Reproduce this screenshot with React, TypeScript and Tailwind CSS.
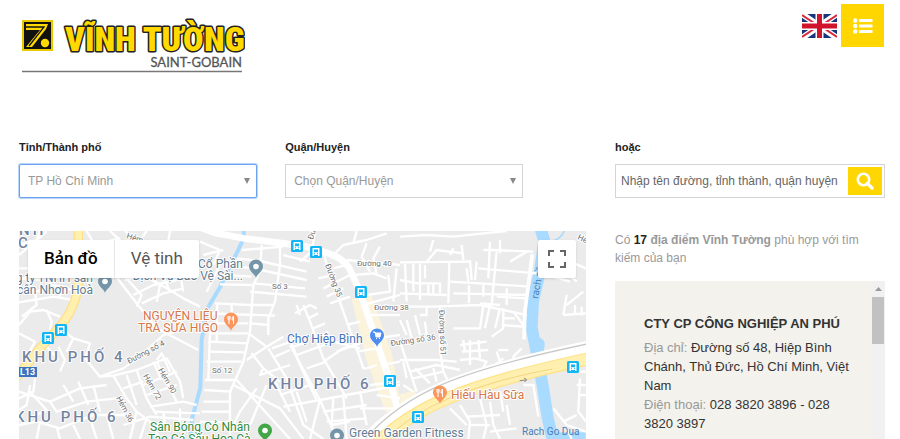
import { useState } from "react";

const streets = {
    west: [
        "M27 130 L70 130 L130 70 L205 60", "M27 90 L110 20", "M27 190 L80 200 L130 180 L190 195", "M27 300 L60 260 L100 255 L150 275", "M110 255 L125 290 L120 315",
        "M27 232 L70 225 L130 215 L190 225", "M75 200 L80 240 L35 275", "M150 180 L150 220", "M27 325 L75 350 L50 395", "M230 18 L260 70 L330 170 L400 260 L440 310 L565 375",
        "M300 18 L345 60 L420 160 L520 220 L570 245", "M345 18 L400 60 L480 90 L570 130", "M345 165 L400 150 L450 180 L440 230", "M370 210 L430 180 L500 165", "M395 235 L460 205 L520 190",
        "M410 18 L380 60 L330 90", "M480 18 L470 80", "M240 60 L330 40", "M345 155 L395 210 L380 245", "M450 130 L480 200", "M500 90 L520 200", "M27 520 L70 500 L75 460",
        "M150 310 L190 340 L240 355 L225 400 L270 455 L340 430 L400 385 L460 330 L500 320", "M145 365 L165 405 L150 440", "M110 365 L145 405", "M190 340 L170 380", "M270 455 L310 452 L350 520 L380 560 L420 590 L450 642",
        "M310 452 L380 435 L470 400 L510 470 L520 520", "M380 435 L410 520 L440 570", "M440 410 L500 530", "M350 450 L380 540", "M400 480 L500 440", "M410 510 L500 480", "M340 490 L400 470",
        "M430 560 L570 565", "M340 600 L420 575 L550 585", "M420 545 L520 530 L560 540", "M460 560 L465 600", "M510 550 L510 600", "M380 560 L360 642", "M410 580 L390 642", "M27 500 L120 530 L210 490 L290 480",
        "M120 530 L140 560 L230 530 L320 520", "M160 480 L190 530", "M205 470 L235 540", "M250 480 L270 560", "M60 480 L50 540 L27 555", "M27 600 L80 590 L150 610 L250 570 L350 570", "M90 590 L80 642", "M140 605 L150 642",
        "M190 600 L210 642", "M240 580 L260 642", "M290 570 L310 642", "M60 500 L110 555 L60 580", "M440 405 L455 385 L480 440", "M430 410 L455 465", "M27 60 L80 45 L90 18", "M110 100 L130 150", "M30 160 L100 165",
    ],
    middle: [
        "M185 60 L180 140 L160 180 L150 320 L130 410 L90 500 L90 642", "M240 60 L240 120 L225 230 L205 280 L205 330", "M125 75 L250 65", "M110 100 L180 108 L320 140", "M75 120 L160 130 L320 165", "M250 90 L330 110",
        "M70 150 L155 155", "M60 178 L155 180", "M160 175 L315 190", "M150 200 L320 215", "M45 235 L150 240 L220 240", "M35 265 L225 272", "M150 295 L205 300", "M30 295 L145 295", "M30 325 L145 325", "M25 350 L145 355", "M25 380 L135 382",
        "M20 410 L125 410", "M15 465 L110 465", "M12 495 L95 500", "M10 530 L90 530", "M5 560 L90 560", "M0 590 L90 592", "M52 235 L50 350", "M95 235 L95 270", "M30 320 L25 465", "M145 325 L200 365 L250 335", "M200 365 L140 405", "M205 370 L260 460 L310 600 L370 642",
        "M215 370 L275 350", "M225 395 L270 375", "M265 330 L300 420 L350 525", "M310 240 L330 290 L370 400 L440 520", "M285 265 L330 240 L350 250", "M290 240 L300 270", "M325 280 L355 265", "M340 310 L375 295", "M350 340 L385 320",
        "M280 365 L325 350", "M290 390 L400 350 L480 370", "M370 410 L430 370 L480 355", "M320 430 L380 410", "M270 360 L360 525 L600 480", "M155 385 L190 430 L180 450 L270 420", "M190 430 L240 470", "M110 465 L250 620 L270 642", "M100 480 L180 520 L240 550 L310 642",
        "M170 490 L120 560 L90 620", "M200 480 L150 600", "M225 470 L270 560", "M240 510 L330 480", "M250 545 L360 525 L330 642", "M290 500 L320 590", "M360 525 L410 640", "M400 520 L395 600 L450 590", "M430 515 L440 642", "M480 500 L500 600", "M370 560 L500 540", "M380 590 L500 580",
        "M345 18 L335 80 L300 110", "M370 75 L380 120 L430 260 L480 400", "M370 190 L450 150", "M380 215 L430 190", "M390 235 L450 215", "M355 160 L400 150", "M400 130 L440 120", "M480 400 L490 430 L500 430", "M410 380 L480 355",
        "M400 90 L430 60 L500 45 L560 25", "M440 105 L600 120", "M470 18 L460 55", "M500 55 L485 95 L510 140", "M540 65 L520 100 L530 150", "M460 150 L520 145 L560 160", "M490 240 L600 210", "M500 210 L570 200 L565 150", "M510 270 L600 270", "M530 340 L600 330", "M470 380 L530 370",
        "M440 300 L480 290", "M500 430 L530 420", "M545 420 L600 410", "M510 480 L600 470", "M530 510 L600 520", "M480 550 L600 550", "M590 130 L580 230",
        "M0 50 L60 75 L40 120", "M10 90 L70 75", "M20 200 L60 120",
    ],
    east: [
        "M0 35 L80 30 L160 35 L250 25 L320 18", "M90 80 L100 45", "M80 110 L110 75 L190 85", "M150 90 L160 70", "M185 60 L190 105", "M0 112 L210 110", "M15 115 L20 230", "M40 115 L40 200", "M75 120 L75 160", "M60 115 L60 225", "M148 112 L145 235", "M0 205 L140 210",
        "M0 165 L55 175 L120 175 L120 205", "M85 180 L85 210", "M100 175 L100 205", "M0 245 L100 245 L240 240 L380 270", "M150 170 L240 175 L390 185", "M200 130 L205 170", "M210 105 L215 165", "M230 110 L225 165", "M250 75 L275 75 L400 80", "M270 50 L265 160", "M235 130 L410 145",
        "M300 45 L300 85", "M290 80 L275 240", "M330 110 L380 80", "M160 205 L380 210", "M207 180 L207 235", "M250 180 L250 215", "M320 190 L320 240", "M290 215 L380 220", "M250 240 L240 310 L160 310", "M270 240 L255 310", "M300 250 L285 310", "M310 250 L310 310 L275 335", "M305 300 L370 305",
        "M310 280 L345 280", "M340 260 L370 300", "M240 235 L300 240", "M0 285 L20 330", "M20 285 L35 340", "M45 270 L60 330", "M75 290 L80 330", "M120 245 L120 375 L130 440 L150 480", "M60 270 L80 270 L80 245", "M0 350 L30 440 L50 500", "M180 360 L260 350", "M185 380 L265 375", "M210 345 L210 420",
        "M235 345 L240 400", "M190 345 L195 380", "M225 400 L260 410 L220 480", "M180 405 L225 400", "M290 380 L300 410 L340 430", "M295 375 L325 375", "M365 370 L340 395 L345 430", "M260 440 L310 400", "M0 405 L110 405 L170 410", "M30 440 L110 420 L180 435", "M40 460 L130 440", "M45 430 L90 475", "M100 430 L110 470", "M10 410 L20 460",
        "M455 100 L530 170", "M480 50 L510 110 L558 130", "M460 155 L510 170", "M490 270 L558 265", "M500 210 L490 270", "M550 200 L500 240", "M525 240 L525 270", "M545 245 L545 272", "M480 410 L520 370 L558 375", "M500 390 L525 385", "M530 440 L558 440", "M540 460 L535 560 L558 590",
        "M530 480 L558 480", "M535 510 L558 510", "M180 540 L210 590 L205 642", "M150 550 L200 600", "M200 575 L300 570", "M240 520 L260 600 L250 642", "M270 530 L280 600 L300 642", "M300 500 L310 560", "M370 480 L400 480 L415 575", "M210 600 L270 600", "M270 620 L350 610", "M460 550 L500 600 L558 620",
        "M490 590 L530 570", "M500 610 L515 642", "M320 540 L330 600", "M10 480 L40 500",
    ],
};

const stops = [[42, 99], [29, 107], [278, 15], [297, 21], [342, 61], [371, 150], [399, 186], [554, 136]];

const Street = ({ lines }: { lines: string[] }) => (
    <g fill="none" stroke="#fff" strokeWidth="7" strokeLinejoin="round">
        {lines.map((d) => <path key={d} d={d} />)}
    </g>
);

const BusStop = ({ x, y }: { x: number; y: number }) => (
    <g transform={`translate(${x - 6} ${y - 6})`}>
        <rect width="12" height="12" rx="1.5" fill="#12b5f5" />
        <path d="M2.500 2h7v8H8V9H4v1H2.500z" fill="#fff" />
        <path d="M4 3.500h4v2.700H4zM4 7.300h1v1H4zM7 7.300h1v1H7z" fill="#12b5f5" />
    </g>
);

const Pin = ({ x, y, color, kind = "dot" }: { x: number; y: number; color: string; kind?: string }) => (
    <g transform={`translate(${x} ${y})`}>
        <path d="M0 0C-.8-4-7-6.500-7-11.500a7 7 0 0 1 14 0C7-6.500.8-4 0 0z" fill={color} />
        {kind === "dot" && <circle cy="-11.500" r="2.800" fill="#fff" />}
        {kind === "food" && <path d="M-3-15v3q0 1 1 1v4M-1-15v3q0 1-1 1M-2-15v3M2.500-7v-8q-1.500 1-1.500 4h1.500" fill="none" stroke="#fff" />}
        {kind === "cart" && <path d="M-4-15h2l1 5h4l1-4h-6M-1-8.500h1M2-8.500h1" fill="#fff" stroke="#fff" />}
    </g>
);

const MapCanvas = () => (
    <svg className="block h-full w-full bg-[#ebebeb] font-['Roboto',sans-serif]" role="img" aria-label="Bản đồ">
        <g transform="scale(.33333)">
            <g fill="#fbf3dc">
                <path d="M998 205l60-10 60 170 35 190-55-15-55-150z" />
                <path d="M1143 490l45-12 10 50-50 22z" />
            </g>
            <g fill="none" stroke="#a9daff">
                <path strokeWidth="12" d="M674 0L675 20L662 48L605 165L564 235L548 325L544 470L520 560L512 642" />
                <path strokeWidth="36" d="M1564 -10L1576 30L1563 120L1542 210L1538 290L1556 380L1572 470L1586 560L1605 642" />
                <path strokeWidth="5" d="M1600 30Q1625 25 1636 0" />
                <path fill="#a9daff" stroke="none" d="M1545 318q30 2 32 18t-12 46zM1590 604h110v40h-105z" />
            </g>
            <g transform="translate(-27 -18)"><Street lines={streets.west} /></g>
            <g transform="translate(543 -18)"><Street lines={streets.middle} /></g>
            <g transform="translate(1143 -18)"><Street lines={streets.east} /></g>
            <g fill="none" strokeLinejoin="round">
                <path stroke="#fff" strokeWidth="20" d="M550 -8L593 7L673 22L793 37L860 46L913 62Q965 75 990 110L1023 182L1073 332L1113 452L1143 560" />
                <path stroke="#fff" strokeWidth="11" d="M1540 70L1518 240L1515 325" />
                <path stroke="#fff" strokeWidth="66" d="M1040 650Q1135 545 1275 485T1710 362" />
                <path stroke="#c9c9c9" strokeWidth="4" d="M1040 622Q1130 520 1270 460T1710 338" />
                <path stroke="#ffe287" strokeWidth="39" d="M1050 662Q1145 560 1285 502T1710 383" />
                <path stroke="#fff0b0" strokeWidth="32" d="M1050 662Q1145 560 1285 502T1710 383" />
                <path stroke="#efc66b" strokeWidth="2" d="M1080 646Q1160 554 1300 498T1600 414" />
                <path stroke="#ffdf83" strokeWidth="28" d="M178 -10L178 135Q180 215 128 280L60 355L-20 455" />
                <path stroke="#fff0b0" strokeWidth="21" d="M178 -10L178 135Q180 215 128 280L60 355L-20 455" />
                <path stroke="#8b8b8b" strokeWidth="3" d="M1502 449l20-2m-7-6l8 5-6 7" />
            </g>
        </g>
        {stops.map(([x, y]) => <BusStop key={`${x}-${y}`} x={x} y={y} />)}
        <rect x="-8" y="136" width="26" height="10" fill="#3c75bd" />
        <text x="1" y="144" fontSize="9" fontWeight="700" fill="#fff">L13</text>
        <g stroke="#fff" strokeWidth="2" strokeLinejoin="round" paintOrder="stroke">
            <g fontSize="8" fill="#6f6f6f">
                <text x="253" y="58">Số 3</text>
                <text x="193" y="142">Số 12</text>
                <text x="338" y="35">Đường 40</text>
                <text x="355" y="79">Đường 38</text>
                <text transform="translate(372 115) rotate(-8)">Đường số 36</text>
                <text transform="translate(306 34) rotate(69)">Đường 35</text>
                <text transform="translate(420 79) rotate(88)">Đường số 51</text>
                <text transform="translate(110 133) rotate(-28)">Đường số 4</text>
                <text transform="translate(139 139) rotate(60)">Hẻm 90</text>
                <text transform="translate(124 145) rotate(60)">Hẻm 72</text>
                <text transform="translate(97 167) rotate(62)">Hẻm 36</text>
                <text transform="translate(107 7) rotate(18)">Hẻm</text>
                <text transform="translate(558 8) rotate(25)">Hẻm</text>
                <text transform="translate(294 9) rotate(-75)">Đường</text>
            </g>
            <g fontSize="15" fontWeight="500" fill="#73839f" className="tracking-[3px]">
                <text x="3" y="131">KHU PHỐ 4</text>
                <text x="-4" y="191">KHU PHỐ 6</text>
                <text x="249" y="158">KHU PHỐ 6</text>
                <text x="0" y="4">NH</text>
                <text x="-1" y="17">C</text>
            </g>
            <g fontSize="12" fill="#637c91">
                <text x="74" y="51" textAnchor="end">Công ty TNHH sản</text>
                <text x="-2" y="63">cân Nhơn Hoà</text>
                <text x="224" y="37" textAnchor="end">Công Ty Cổ Phần</text>
                <text x="224" y="49" textAnchor="end">Dịch Vụ Bảo Vệ Sài...</text>
                <text x="330" y="206">Green Garden Fitness</text>
            </g>
            <g fontSize="12" fill="#d4764b">
                <text x="124" y="89">NGUYÊN LIỆU</text>
                <text x="119" y="101">TRÀ SỮA HIGO</text>
                <text x="432" y="168">Hiếu Hàu Sữa</text>
            </g>
            <g fontSize="12" fill="#2e8b3d">
                <text x="131" y="200">Sân Bóng Cỏ Nhân</text>
                <text x="129" y="212">Tạo Cá Sấu Hoa Cà</text>
            </g>
            <text x="268" y="112" fontSize="12" fill="#4272b8">Chợ Hiệp Bình</text>
        </g>
        <g fontSize="10" fill="#4a80b8">
            <text x="503" y="204">Rach Go Dua</text>
            <text transform="translate(519 68) rotate(-80)">rach cầu</text>
        </g>
        <Pin x={86} y={62} color="#7595a8" />
        <Pin x={237} y={47} color="#7595a8" />
        <Pin x={318} y={216} color="#7595a8" />
        <Pin x={246} y={211} color="#43a747" />
        <Pin x={212} y={100} color="#fb965f" kind="food" />
        <Pin x={421} y={173} color="#fb965f" kind="food" />
        <Pin x={358} y={116} color="#4d8df0" kind="cart" />
    </svg>
);

const Logo = () => (
    <svg width="224" height="64" viewBox="0 0 224 64" role="img" aria-label="Vĩnh Tường Saint-Gobain">
        <path d="M1 8h31v31H1z" fill="#e8c800" />
        <path d="M3 10h27v27H3z" fill="#111" />
        <path d="M5 12h22l-2 5-14 18H5l14-17H5z" fill="#ffd900" />
        <path d="M5 15h18L8 34" fill="none" stroke="#111" strokeWidth="1.300" />
        <circle cx="24" cy="31" r="4.200" fill="#ffd900" />
        <text x="44" y="39" fontSize="34" fontWeight="900" fill="#ffd900" stroke="#222" strokeWidth="3" strokeLinejoin="round" paintOrder="stroke" className="font-['Roboto_Condensed','Liberation_Sans_Narrow',sans-serif]">VĨNH TƯỜNG</text>
        <text x="221" y="55" textAnchor="end" fontSize="13" fill="#555" stroke="#555" strokeWidth=".3" className="font-['Lato',sans-serif]">SAINT-GOBAIN</text>
        <path d="M1 59.500h220" stroke="#777" strokeWidth="1.500" />
    </svg>
);

const Flag = () => (
    <svg width="35" height="24" viewBox="0 0 35 24" aria-hidden="true">
        <path d="M0 0h35v24H0z" fill="#16357d" />
        <path d="M0 0l35 24M35 0L0 24" stroke="#fff" strokeWidth="6" />
        <path d="M0 1l15 10M35 1L20 11M0 23l15-10M35 23L20 13" stroke="#d6293b" strokeWidth="2" />
        <path d="M17.500 0v24M0 12h35" stroke="#fff" strokeWidth="8" />
        <path d="M17.500 0v24M0 12h35" stroke="#d0142c" strokeWidth="5" />
    </svg>
);

const SelectField = ({ id, label, value, active }: { id: string; label: string; value: string; active?: boolean }) => (
    <div className="w-[42%]">
        <label htmlFor={id} className="block text-[11px] font-bold leading-4 text-[#222]">{label}</label>
        <div className="relative mt-[9px]">
            <select id={id} className={`block h-[34px] w-full appearance-none border bg-white px-2 text-xs text-[#999] outline-none ${active ? "rounded-xs border-[#6ea4ee] ring-1 ring-[#b5d3fb]" : "border-[#d5d5d5]"}`}>
                <option>{value}</option>
            </select>
            <svg className="pointer-events-none absolute right-[7px] top-[14px]" width="6" height="6" viewBox="0 0 6 6" aria-hidden="true">
                <path d="M0 0h6L3 6z" fill="#888" />
            </svg>
        </div>
    </div>
);

export default function App() {
    const [mapType, setMapType] = useState("map");

    return (
        <div className="flex h-screen flex-col overflow-hidden bg-white pl-[19px] pr-[15px] font-['Liberation_Sans',Arial,sans-serif]">
            <header className="flex justify-between pr-px">
                <a href="#" className="mt-[12px] block pl-[2px]"><Logo /></a>
                <div className="flex items-start gap-1 pt-1">
                    <a href="#" aria-label="English" className="mt-[10px]"><Flag /></a>
                    <button type="button" aria-label="Menu" className="flex size-[43px] items-center justify-center bg-[#ffd600]">
                        <svg width="20" height="16" viewBox="0 0 20 16" fill="#fff" aria-hidden="true">
                            <circle cx="2.200" cy="2.500" r="2.200" /><circle cx="2.200" cy="8" r="2.200" /><circle cx="2.200" cy="13.500" r="2.200" />
                            <path d="M6 1h13.500v3H6zM6 6.500h13.500v3H6zM6 12h13.500v3H6z" />
                        </svg>
                    </button>
                </div>
            </header>
            <main className="mt-[63px] grid min-h-0 flex-1 grid-cols-[minmax(0,1fr)_270px] gap-x-[29px]">
                <section className="flex min-h-0 flex-col">
                    <div className="flex gap-7">
                        <SelectField id="city" label="Tỉnh/Thành phố" value="TP Hồ Chí Minh" active />
                        <SelectField id="district" label="Quận/Huyện" value="Chọn Quận/Huyện" />
                    </div>
                    <div className="relative mt-[33px] min-h-0 flex-1 overflow-hidden font-['Roboto',sans-serif]">
                        <MapCanvas />
                        <div className="absolute left-[9px] top-[9px] flex h-[38px] rounded-xs bg-white text-[17px] shadow-sm">
                            <button type="button" onClick={() => setMapType("map")} className={`border-r border-[#e6e6e6] px-4 ${mapType === "map" ? "font-medium text-black" : "text-[#565656]"}`}>Bản đồ</button>
                            <button type="button" onClick={() => setMapType("satellite")} className={`px-4 ${mapType === "satellite" ? "font-medium text-black" : "text-[#565656]"}`}>Vệ tinh</button>
                        </div>
                        <button type="button" aria-label="Fullscreen" className="absolute right-[10px] top-[9px] flex size-[38px] items-center justify-center rounded-xs bg-white shadow-sm">
                            <svg width="18" height="18" viewBox="0 0 18 18" fill="none" stroke="#666" strokeWidth="2" aria-hidden="true">
                                <path d="M1 6V1h5M12 1h5v5M17 12v5h-5M6 17H1v-5" />
                            </svg>
                        </button>
                    </div>
                </section>
                <section className="flex min-h-0 flex-col">
                    <label htmlFor="search" className="block text-[11px] font-bold leading-4 text-[#222]">hoặc</label>
                    <form className="mt-[9px] flex h-[34px] shrink-0 items-center border border-[#d5d5d5] pl-[5px] pr-[2px]">
                        <input id="search" type="text" placeholder="Nhập tên đường, tỉnh thành, quận huyện" className="min-w-0 flex-1 text-xs outline-none placeholder:text-[#666]" />
                        <button type="button" aria-label="Search" className="flex h-7 w-[34px] items-center justify-center bg-[#ffd600]">
                            <svg width="18" height="18" viewBox="0 0 18 18" fill="none" stroke="#fff" aria-hidden="true">
                                <circle cx="7.500" cy="7.500" r="5.700" strokeWidth="2.600" />
                                <path d="M11.500 11.500l4.500 4.500" strokeWidth="3.200" strokeLinecap="round" />
                            </svg>
                        </button>
                    </form>
                    <p className="mt-[33px] text-xs leading-[18px] text-[#999]">
                        Có <b className="text-[#222]">17</b> <b>địa điểm Vĩnh Tường</b> phù hợp với tìm kiếm của bạn
                    </p>
                    <div className="mt-[14px] flex min-h-0 flex-1 overflow-hidden bg-[#f3f2ec]">
                        <div className="flex-1 pl-[29px] pr-3 pt-[33px] text-[13px] leading-[19px] text-[#333]">
                            <h2 className="mb-1 text-[13px] font-bold leading-5">CTY CP CÔNG NGHIỆP AN PHÚ</h2>
                            <p><span className="text-[#999]">Địa chỉ:</span> Đường số 48, Hiệp Bình Chánh, Thủ Đức, Hồ Chí Minh, Việt Nam</p>
                            <p><span className="text-[#999]">Điện thoại:</span> 028 3820 3896 - 028 3820 3897</p>
                        </div>
                        <div className="flex w-[14px] flex-col items-center bg-[#f1f1f1]">
                            <svg className="my-[6px] shrink-0" width="7" height="4" viewBox="0 0 7 4" aria-hidden="true"><path d="M0 4l3.500-4L7 4z" fill="#999" /></svg>
                            <div className="h-[47px] w-3 shrink-0 bg-[#c1c1c1]" />
                        </div>
                    </div>
                </section>
            </main>
        </div>
    );
}
